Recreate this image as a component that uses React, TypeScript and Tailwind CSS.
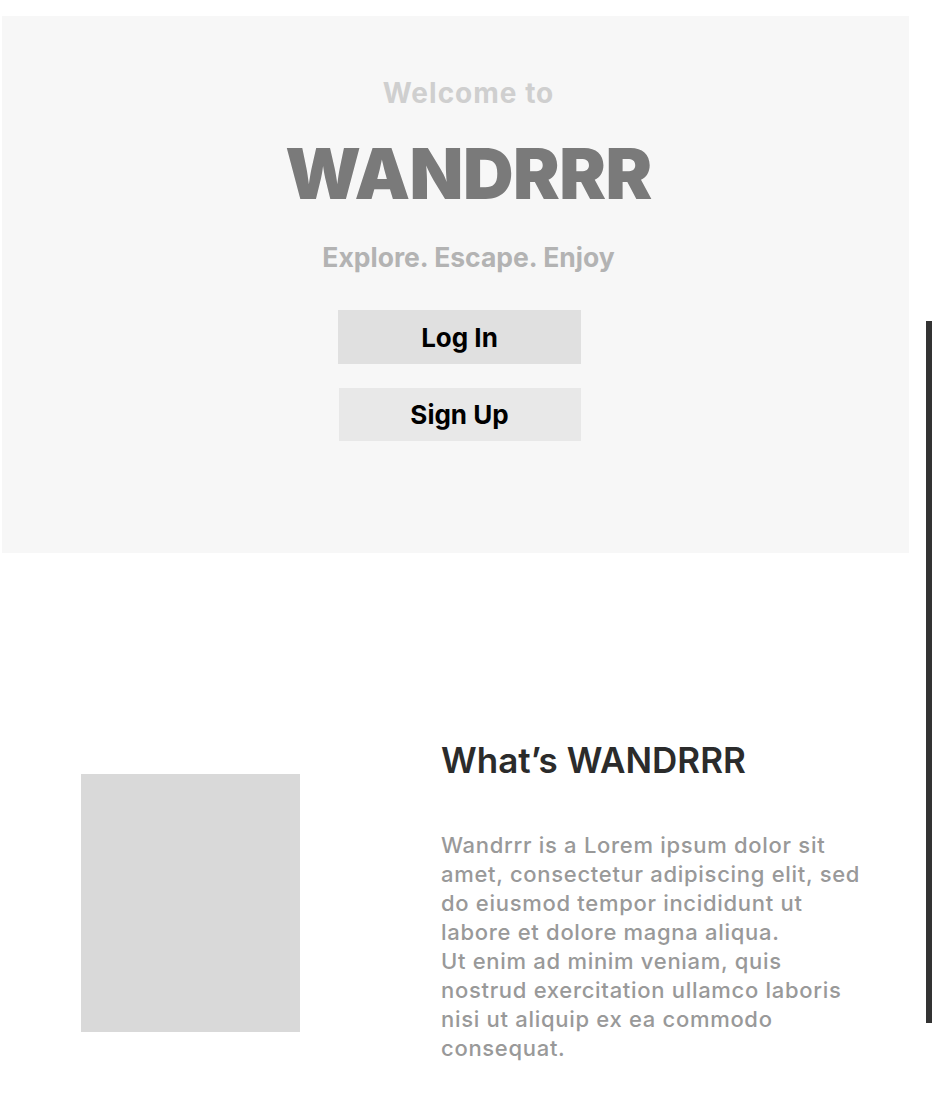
const App = () => {
  return (
    <div className="relative min-h-[1112px] bg-white overflow-hidden" style={{ fontFamily: "Inter, 'Noto Sans', sans-serif" }}>
      {/* Hero */}
      <section className="mt-4 ml-[2px] w-[907px] h-[537px] bg-[#f7f7f7] flex flex-col items-center pt-[60px]">
        <p className="text-[28px] font-bold text-[#cfcfcf] leading-[34px] tracking-[1px] ml-[26px]">Welcome to</p>
        <h1 className="mt-[24px] text-[70px] font-black text-[#7a7a7a] leading-[80px] tracking-[-0.5px] ml-[26px]">WANDRRR</h1>
        <p className="mt-[27px] text-[26.5px] font-bold text-[#b3b3b3] leading-[32px] ml-[26px]">Explore. Escape. Enjoy</p>
        <div className="mt-[37px] flex flex-col items-center gap-[24px] ml-[8px]">
          <button className="w-[243px] h-[54px] bg-[#e0e0e0] text-black text-[26px] font-bold">Log In</button>
          <button className="w-[242px] h-[53px] bg-[#e8e8e8] text-black text-[26px] font-bold">Sign Up</button>
        </div>
      </section>

      {/* cut-off label on the left edge */}
      <span className="absolute left-[-8px] top-[654px] text-[12px] text-[#bbbbbb]">e</span>

      {/* right track */}
      <div className="absolute left-[926px] top-[321px] w-[6px] h-[702px] bg-[#333333]" />

      {/* What's WANDRRR */}
      <section className="mt-[187px] flex">
        <div className="ml-[81px] mt-[34px] w-[219px] h-[258px] bg-[#d9d9d9]" />
        <div className="ml-[141px] w-[424px]">
          <h2 className="text-[35px] font-semibold text-[#2b2b2b] leading-[40px]">What’s WANDRRR</h2>
          <p className="mt-[51px] text-[22px] font-medium text-[#999999] leading-[29px] tracking-[0.7px]">
            Wandrrr is a Lorem ipsum dolor sit amet, consectetur adipiscing elit, sed do eiusmod tempor incididunt ut labore et dolore magna aliqua.
            <br />
            Ut enim ad minim veniam, quis nostrud exercitation ullamco laboris nisi ut aliquip ex ea commodo consequat.
          </p>
        </div>
      </section>
    </div>
  );
};

export default App;
